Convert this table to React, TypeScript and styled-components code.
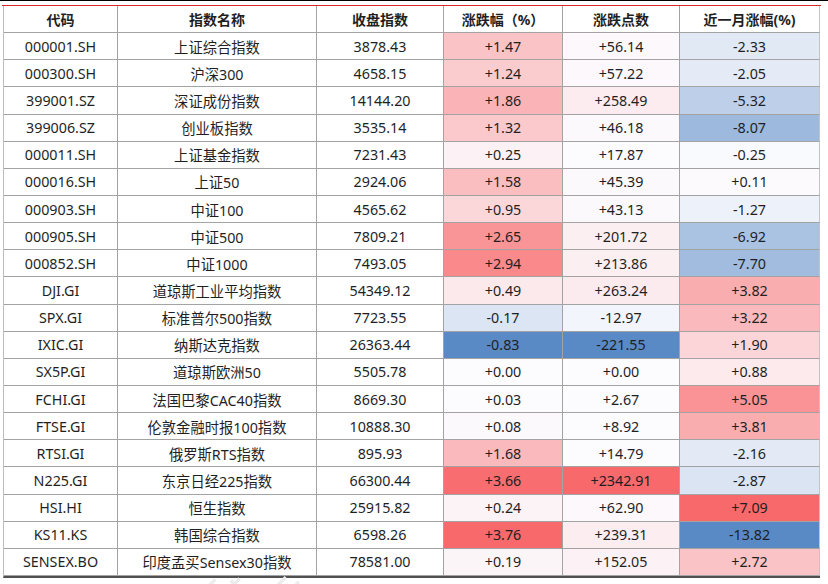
import React from 'react'
import styled, { createGlobalStyle } from 'styled-components'

type Row = [string, string, string, number, number, number]

const rows: Row[] = [
	['000001.SH', '上证综合指数', '3878.43', 1.47, 56.14, -2.33],
	['000300.SH', '沪深300', '4658.15', 1.24, 57.22, -2.05],
	['399001.SZ', '深证成份指数', '14144.20', 1.86, 258.49, -5.32],
	['399006.SZ', '创业板指数', '3535.14', 1.32, 46.18, -8.07],
	['000011.SH', '上证基金指数', '7231.43', 0.25, 17.87, -0.25],
	['000016.SH', '上证50', '2924.06', 1.58, 45.39, 0.11],
	['000903.SH', '中证100', '4565.62', 0.95, 43.13, -1.27],
	['000905.SH', '中证500', '7809.21', 2.65, 201.72, -6.92],
	['000852.SH', '中证1000', '7493.05', 2.94, 213.86, -7.7],
	['DJI.GI', '道琼斯工业平均指数', '54349.12', 0.49, 263.24, 3.82],
	['SPX.GI', '标准普尔500指数', '7723.55', -0.17, -12.97, 3.22],
	['IXIC.GI', '纳斯达克指数', '26363.44', -0.83, -221.55, 1.9],
	['SX5P.GI', '道琼斯欧洲50', '5505.78', 0, 0, 0.88],
	['FCHI.GI', '法国巴黎CAC40指数', '8669.30', 0.03, 2.67, 5.05],
	['FTSE.GI', '伦敦金融时报100指数', '10888.30', 0.08, 8.92, 3.81],
	['RTSI.GI', '俄罗斯RTS指数', '895.93', 1.68, 14.79, -2.16],
	['N225.GI', '东京日经225指数', '66300.44', 3.66, 2342.91, -2.87],
	['HSI.HI', '恒生指数', '25915.82', 0.24, 62.9, 7.09],
	['KS11.KS', '韩国综合指数', '6598.26', 3.76, 239.31, -13.82],
	['SENSEX.BO', '印度孟买Sensex30指数', '78581.00', 0.19, 152.05, 2.72],
]

const heads = ['代码', '指数名称', '收盘指数', '涨跌幅（%）', '涨跌点数', '近一月涨幅(%)']

//=> colour scale (blue - white - red, midpoint 0)
const MID = [252, 252, 255]
const RED = [248, 105, 107]
const BLUE = [90, 138, 198]

const mix = (to: number[], t: number) =>
	`rgb(${MID.map((m, i) => Math.round(m + (to[i] - m) * t)).join(',')})`

const scale = (col: number) => {
	const vals = rows.map(r => r[col] as number)
	const max = Math.max(...vals)
	const min = Math.min(...vals)
	return (v: number) =>
		v > 0 ? mix(RED, v / max) : v < 0 ? mix(BLUE, v / min) : mix(RED, 0)
}

const scales = [scale(3), scale(4), scale(5)]

const fmt = (v: number) => (v < 0 ? '' : '+') + v.toFixed(2)

//=> DOM
export default () => (
	<>
		<Global />
		<Page>
			<TopRule />
			<Sheet>
				{heads.map(h => (
					<Head key={h}>{h}</Head>
				))}
				{rows.map(r => (
					<React.Fragment key={r[0]}>
						<Cell>{r[0]}</Cell>
						<Cell>{r[1]}</Cell>
						<Cell>{r[2]}</Cell>
						{scales.map((s, i) => (
							<Cell key={i} $bg={s(r[3 + i] as number)}>
								{fmt(r[3 + i] as number)}
							</Cell>
						))}
					</React.Fragment>
				))}
			</Sheet>
			<Mark viewBox='0 0 100 10'>
				<path d='M8 10 L14 4 M30 10 L36 3 M33 10 L28 5 M70 10 L78 2 M86 10 L90 6' />
			</Mark>
		</Page>
	</>
)

//=> Style
const Global = createGlobalStyle`
	html, body {
		margin: 0;
		background: #fff;
	}
	body {
		font-family: 'Noto Sans', 'Noto Sans CJK SC', sans-serif;
		color: #1f1f1f;
	}
`

const Page = styled.div`
	position: relative;
	width: 828px;
	height: 584px;
	border-top: 1px solid #000;
	overflow: hidden;
`

const TopRule = styled.div`
	margin: 4px 7px 0 2px;
	height: 1px;
	background: #d8262a;
`

const Sheet = styled.div`
	display: grid;
	grid-template-columns: 114px 199px 127px 119px 117px 140px;
	grid-auto-rows: 27.15px;
	margin-left: 3px;
	width: 817px;
	border-left: 1px solid #bdbdbd;
	border-bottom: 2px solid #505050;
	box-sizing: border-box;
	> div:nth-child(6n) {
		border-right-color: #c4c4c4;
	}
`

const Head = styled.div`
	display: flex;
	align-items: center;
	justify-content: center;
	font-size: 14px;
	font-weight: 700;
	border-right: 1px solid #a3a3a3;
	border-bottom: 1px solid #a3a3a3;
	box-sizing: border-box;
	white-space: nowrap;
`

const Cell = styled.div<{ $bg?: string }>`
	display: flex;
	align-items: center;
	justify-content: center;
	font-size: 14.3px;
	background: ${p => p.$bg || 'transparent'};
	border-right: 1px solid #a3a3a3;
	border-bottom: 1px solid #a3a3a3;
	box-sizing: border-box;
	white-space: nowrap;
`

const Mark = styled.svg`
	position: absolute;
	left: 200px;
	top: 574px;
	width: 110px;
	height: 11px;
	fill: none;
	stroke: #ececec;
	stroke-width: 3;
`
